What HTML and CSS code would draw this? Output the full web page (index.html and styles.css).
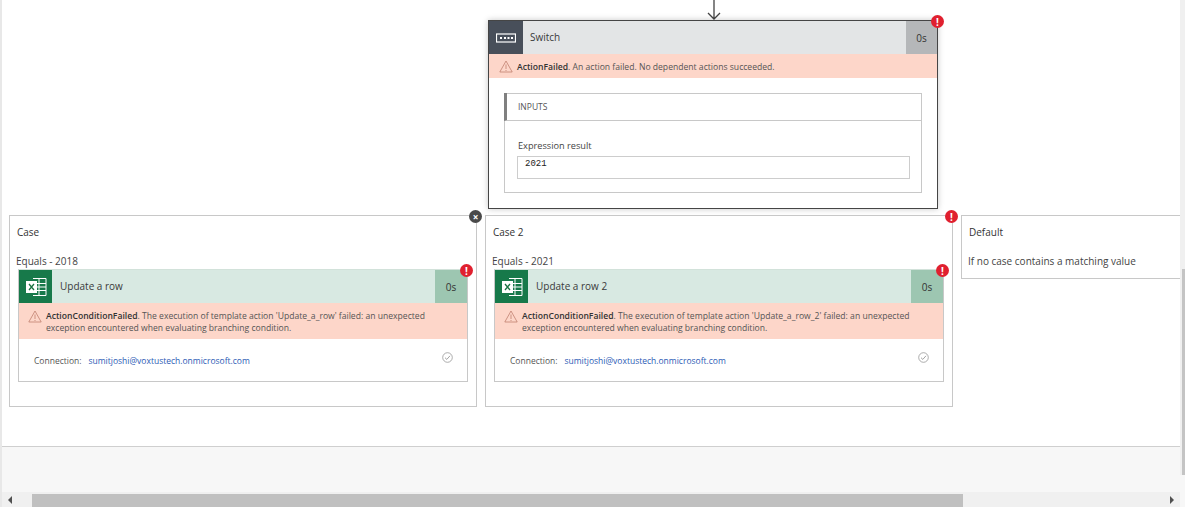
FILE: index.html
```html
<!DOCTYPE html>
<html lang="en">
<head>
<meta charset="utf-8">
<title>Run details</title>
<link rel="stylesheet" href="styles.css">
</head>
<body>
<div class="page">
  <main class="canvas">
    <div class="top">
      <svg class="arrow" width="18" height="21" viewBox="0 0 18 21"><path d="M9 0V19M3 13L9 19L15 13" fill="none" stroke="#444" stroke-width="1.300"/></svg>
      <section class="switch">
        <span class="badge badge-switch">!</span>
        <header class="head head-switch">
          <span class="ico ico-switch">
            <svg width="20" height="10" viewBox="0 0 20 10"><rect x="0.5" y="1" width="19" height="8" fill="none" stroke="#fff" stroke-width="1.200"/><path d="M4 4h2v2H4zM8 4h2v2H8zM11.500 4h2v2h-2zM15 4h2v2h-2z" fill="#fff"/></svg>
          </span>
          <span class="title">Switch</span>
          <span class="dur dur-switch">0s</span>
        </header>
        <div class="err err-single">
          <svg class="warn" width="14" height="13" viewBox="0 0 14 13"><path d="M7 1L13.200 12H.8Z M7 4.500V9 M7 10V11" fill="none" stroke="#c08070" stroke-width="0.8"/></svg>
          <p><b>ActionFailed</b>. An action failed. No dependent actions succeeded.</p>
        </div>
        <div class="switch-body">
          <div class="inputs">
            <div class="inputs-head">INPUTS</div>
            <div class="inputs-body">
              <div class="field-label">Expression result</div>
              <div class="field-value">2021</div>
            </div>
          </div>
        </div>
      </section>
    </div>
    <div class="cases">
      <section class="case">
        <span class="badge badge-close">×</span>
        <div class="case-title">Case</div>
        <div class="case-cond">Equals - 2018</div>
        <article class="action">
          <span class="badge badge-action">!</span>
          <header class="head head-excel">
            <span class="ico ico-excel">
              <svg width="22" height="20" viewBox="0 0 22 20"><path d="M8 1.500H21V18.500H8M8 6.500H21M8 10H21M8 13.500H21M14 1.500V18.500" fill="none" stroke="#fff" stroke-width="1"/><rect x="1" y="4" width="11" height="12" fill="#fff"/><path d="M4 7L9 13M9 7L4 13" stroke="#1a7343" stroke-width="1.300"/></svg>
            </span>
            <span class="title">Update a row</span>
            <span class="dur dur-excel">0s</span>
          </header>
          <div class="err err-double">
            <svg class="warn" width="14" height="13" viewBox="0 0 14 13"><path d="M7 1L13.200 12H.8Z M7 4.500V9 M7 10V11" fill="none" stroke="#c08070" stroke-width="0.8"/></svg>
            <p><b>ActionConditionFailed</b>. The execution of template action 'Update_a_row' failed: an unexpected exception encountered when evaluating branching condition.</p>
          </div>
          <div class="conn">
            <span class="conn-label">Connection:</span>
            <a class="conn-link">sumitjoshi@voxtustech.onmicrosoft.com</a>
            <svg class="check" width="11" height="11" viewBox="0 0 11 11"><circle cx="5.500" cy="5.500" r="4.800" fill="none" stroke="#8a8a8a" stroke-width="0.7"/><path d="M3 5.700L4.800 7.400L8 3.800" fill="none" stroke="#8a8a8a" stroke-width="0.8"/></svg>
          </div>
        </article>
      </section>
      <section class="case">
        <span class="badge badge-close badge-red">!</span>
        <div class="case-title">Case 2</div>
        <div class="case-cond">Equals - 2021</div>
        <article class="action">
          <span class="badge badge-action">!</span>
          <header class="head head-excel">
            <span class="ico ico-excel">
              <svg width="22" height="20" viewBox="0 0 22 20"><path d="M8 1.500H21V18.500H8M8 6.500H21M8 10H21M8 13.500H21M14 1.500V18.500" fill="none" stroke="#fff" stroke-width="1"/><rect x="1" y="4" width="11" height="12" fill="#fff"/><path d="M4 7L9 13M9 7L4 13" stroke="#1a7343" stroke-width="1.300"/></svg>
            </span>
            <span class="title">Update a row 2</span>
            <span class="dur dur-excel">0s</span>
          </header>
          <div class="err err-double">
            <svg class="warn" width="14" height="13" viewBox="0 0 14 13"><path d="M7 1L13.200 12H.8Z M7 4.500V9 M7 10V11" fill="none" stroke="#c08070" stroke-width="0.8"/></svg>
            <p><b>ActionConditionFailed</b>. The execution of template action 'Update_a_row_2' failed: an unexpected exception encountered when evaluating branching condition.</p>
          </div>
          <div class="conn">
            <span class="conn-label">Connection:</span>
            <a class="conn-link">sumitjoshi@voxtustech.onmicrosoft.com</a>
            <svg class="check" width="11" height="11" viewBox="0 0 11 11"><circle cx="5.500" cy="5.500" r="4.800" fill="none" stroke="#8a8a8a" stroke-width="0.7"/><path d="M3 5.700L4.800 7.400L8 3.800" fill="none" stroke="#8a8a8a" stroke-width="0.8"/></svg>
          </div>
        </article>
      </section>
      <section class="case case-default">
        <div class="case-title">Default</div>
        <div class="case-cond">If no case contains a matching value</div>
      </section>
    </div>
  </main>
  <div class="footer"></div>
  <div class="hscroll">
    <span class="arr-l"></span>
    <div class="thumb"></div>
    <span class="arr-r"></span>
  </div>
  <div class="vscroll"><div class="vthumb"></div></div>
</div>
</body>
</html>
```

FILE: styles.css
```css
* { box-sizing: border-box; }
html, body { margin: 0; height: 100%; }
body {
  font-family: "Open Sans", "Noto Sans", sans-serif;
  color: #333;
  background: #f7f7f7;
  overflow: hidden;
}
p { margin: 0; }
.page {
  position: relative;
  width: 1185px;
  height: 507px;
  display: flex;
  flex-direction: column;
  overflow: hidden;
  border-left: 2px solid #e8e8e8;
}
.canvas {
  flex: none;
  height: 447px;
  margin-right: 5px;
  background: #fff;
  border-bottom: 1px solid #cfcfcf;
  overflow: hidden;
}
.top {
  height: 215px;
  position: relative;
}
.arrow {
  position: absolute;
  left: 703px;
  top: 0;
}
.switch {
  position: absolute;
  left: 486px;
  top: 20px;
  width: 450px;
  height: 189px;
  background: #fff;
  border: 1px solid #454545;
  box-shadow: 0 0 6px rgba(0, 0, 0, .22);
}
.head {
  display: flex;
  align-items: center;
  height: 33px;
}
.head-switch { background: #e3e5e6; }
.head-excel { background: #d8e9e2; }
.ico {
  flex: none;
  align-self: stretch;
  display: flex;
  align-items: center;
  justify-content: center;
}
.ico-switch { width: 34px; background: #484f5a; }
.ico-excel { width: 33px; background: #17794a; }
.title {
  flex: 1;
  padding: 0 0 2px 8px;
  font-size: 10px;
  color: #3a3a3a;
}
.head-switch .title { padding-left: 7px; }
.dur {
  flex: none;
  align-self: stretch;
  display: flex;
  align-items: center;
  justify-content: center;
  font-size: 10px;
  color: #333;
}
.dur-switch { width: 31px; background: #b5b7b9; }
.dur-excel { width: 32px; background: #9dc6b1; }
.err {
  display: flex;
  background: #fdd6c9;
  font-size: 8.600px;
  line-height: 12px;
  color: #555;
}
.err b { font-weight: 600; color: #333; }
.err-single { height: 24px; align-items: center; padding: 1px 0 0 10px; gap: 4px; }
.err-double { height: 36px; padding: 7px 18px 0 9px; gap: 4px; }
.warn { flex: none; }
.switch-body { padding: 15px 15px 0; }
.inputs {
  height: 100px;
  border: 1px solid #c8c8c8;
}
.inputs-head {
  height: 28px;
  display: flex;
  align-items: center;
  padding-left: 11px;
  border-left: 3px solid #808080;
  border-bottom: 1px solid #c8c8c8;
  margin: -1px 0 0 -1px;
  font-size: 8.500px;
  color: #555;
}
.inputs-body { padding: 19px 11px 0 12px; }
.field-label { padding-left: 1px; font-size: 9.200px; line-height: 12px; color: #444; }
.field-value {
  height: 23px;
  margin-top: 4px;
  padding-left: 7px;
  border: 1px solid #cdcdcd;
  font-family: "Liberation Mono", monospace;
  font-size: 9px;
  line-height: 15px;
  color: #222;
}
.cases {
  display: flex;
  gap: 8px;
  padding-left: 7px;
}
.case {
  position: relative;
  flex: none;
  width: 468px;
  height: 192px;
  padding: 9px 8px 0 7px;
  border: 1px solid #c8c8c8;
}
.case-default {
  width: 240px;
  height: 64px;
}
.case-title {
  height: 26px;
  font-size: 10px;
  line-height: 14px;
  color: #333;
}
.case-cond {
  height: 18px;
  margin-left: -1px;
  padding-top: 2px;
  font-size: 10px;
  line-height: 16px;
  color: #444;
}
.action {
  position: relative;
  width: 450px;
  margin-left: 1px;
  height: 113px;
  border: 1px solid #c8c8c8;
  border-top-color: #d2e2da;
  background: #fff;
}
.conn {
  position: relative;
  display: flex;
  align-items: center;
  height: 42px;
  padding-left: 15px;
  font-size: 8.500px;
  color: #555;
}
.conn-link { margin-left: 7px; color: #2c5bb5; }
.check { position: absolute; right: 14px; top: 13px; }
.badge {
  position: absolute;
  display: flex;
  align-items: center;
  justify-content: center;
  width: 13px;
  height: 13px;
  border-radius: 50%;
  background: #e0202f;
  color: #fff;
  font-size: 10px;
  font-weight: 700;
  line-height: 1;
  z-index: 2;
}
.badge-switch { right: -7px; top: -6px; }
.badge-action { right: -6px; top: -6px; }
.badge-close { right: -6px; top: -6px; background: #4a4a4a; }
.badge-red { background: #e0202f; }
.footer { flex: 1; }
.hscroll {
  flex: none;
  display: flex;
  align-items: flex-end;
  height: 15px;
  background: #f0f0f0;
  margin-right: 5px;
  padding-left: 6px;
}
.arr-l, .arr-r {
  flex: none;
  align-self: center;
  width: 0;
  height: 0;
  border-top: 4px solid transparent;
  border-bottom: 4px solid transparent;
}
.arr-l { border-right: 4px solid #505050; }
.arr-r { margin-left: 207px; border-left: 4px solid #505050; }
.thumb {
  flex: none;
  width: 931px;
  height: 13px;
  margin-left: 20px;
  background: #c0c0c0;
}
.vscroll {
  position: absolute;
  right: 0;
  top: 0;
  width: 5px;
  height: 475px;
  padding: 269px 0 0 2px;
  background: #f0f0f0;
}
.vthumb {
  width: 3px;
  height: 206px;
  background: #c4c4c4;
}
```
